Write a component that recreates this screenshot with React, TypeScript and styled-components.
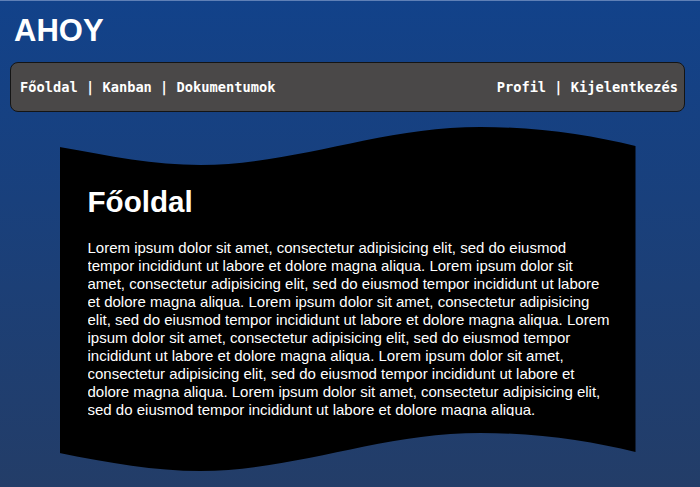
import React from "react";
import styled, { createGlobalStyle } from "styled-components";

const GlobalStyle = createGlobalStyle`
  html, body { margin: 0; padding: 0; }
  body {
    min-height: 100vh;
    background: linear-gradient(180deg, #12428a 0%, #233d68 100%);
    border-top: 1px solid #5f80b6;
    box-sizing: border-box;
    font-family: "Liberation Sans", Arial, sans-serif;
    color: #fff;
  }
`;

const Page = styled.div`
  display: flex;
  flex-direction: column;
  padding: 12px 15px 0 10px;
`;

const Title = styled.h1`
  margin: 0 0 0 4px;
  font-size: 31px;
  line-height: 36px;
  font-weight: bold;
  color: #fff;
`;

const NavBar = styled.nav`
  margin-top: 13px;
  height: 50px;
  box-sizing: border-box;
  display: flex;
  align-items: center;
  justify-content: space-between;
  padding: 0 6px 0 9px;
  background: #4a4848;
  border: 1px solid #141414;
  border-radius: 8px;
  font-family: "DejaVu Sans Mono", monospace;
  font-weight: bold;
  font-size: 13.7px;
  white-space: pre;
`;

const NavGroup = styled.div`
  display: flex;
  align-items: center;
`;

const NavLink = styled.a`
  color: #fff;
  text-decoration: none;
`;

const Sep = styled.span`
  color: #fff;
`;

const CardWrap = styled.main`
  margin-top: 15px;
  display: flex;
  justify-content: center;
`;

const Card = styled.section`
  width: 576px;
  height: 346px;
  box-sizing: border-box;
  background: #000;
  padding: 58px 23px 0 28px;
  clip-path: path("M0 20 C 50 29, 95 38, 141 38 C 235 38, 320 0, 421 0 C 480 0, 530 8, 576 19 L 576 325 C 530 314, 480 306, 421 306 C 320 306, 235 344, 141 344 C 95 344, 50 336, 0 326 Z");
`;

const Heading = styled.h2`
  margin: 0;
  font-size: 29.6px;
  line-height: 34px;
  font-weight: bold;
`;

const TextBox = styled.div`
  margin-top: 20px;
  height: 177px;
  overflow: hidden;
`;

const Para = styled.p`
  margin: 0;
  font-size: 15px;
  line-height: 18px;
`;

const lorem =
  "Lorem ipsum dolor sit amet, consectetur adipisicing elit, sed do eiusmod tempor incididunt ut labore et dolore magna aliqua.";

export default function App() {
  const text = Array(6).fill(lorem).join(" ");
  return (
    <>
      <GlobalStyle />
      <Page>
        <Title>AHOY</Title>
        <NavBar>
          <NavGroup>
            <NavLink href="#">Főoldal</NavLink>
            <Sep> | </Sep>
            <NavLink href="#">Kanban</NavLink>
            <Sep> | </Sep>
            <NavLink href="#">Dokumentumok</NavLink>
          </NavGroup>
          <NavGroup>
            <NavLink href="#">Profil</NavLink>
            <Sep> | </Sep>
            <NavLink href="#">Kijelentkezés</NavLink>
          </NavGroup>
        </NavBar>
        <CardWrap>
          <Card>
            <Heading>Főoldal</Heading>
            <TextBox>
              <Para>{text}</Para>
            </TextBox>
          </Card>
        </CardWrap>
      </Page>
    </>
  );
}
